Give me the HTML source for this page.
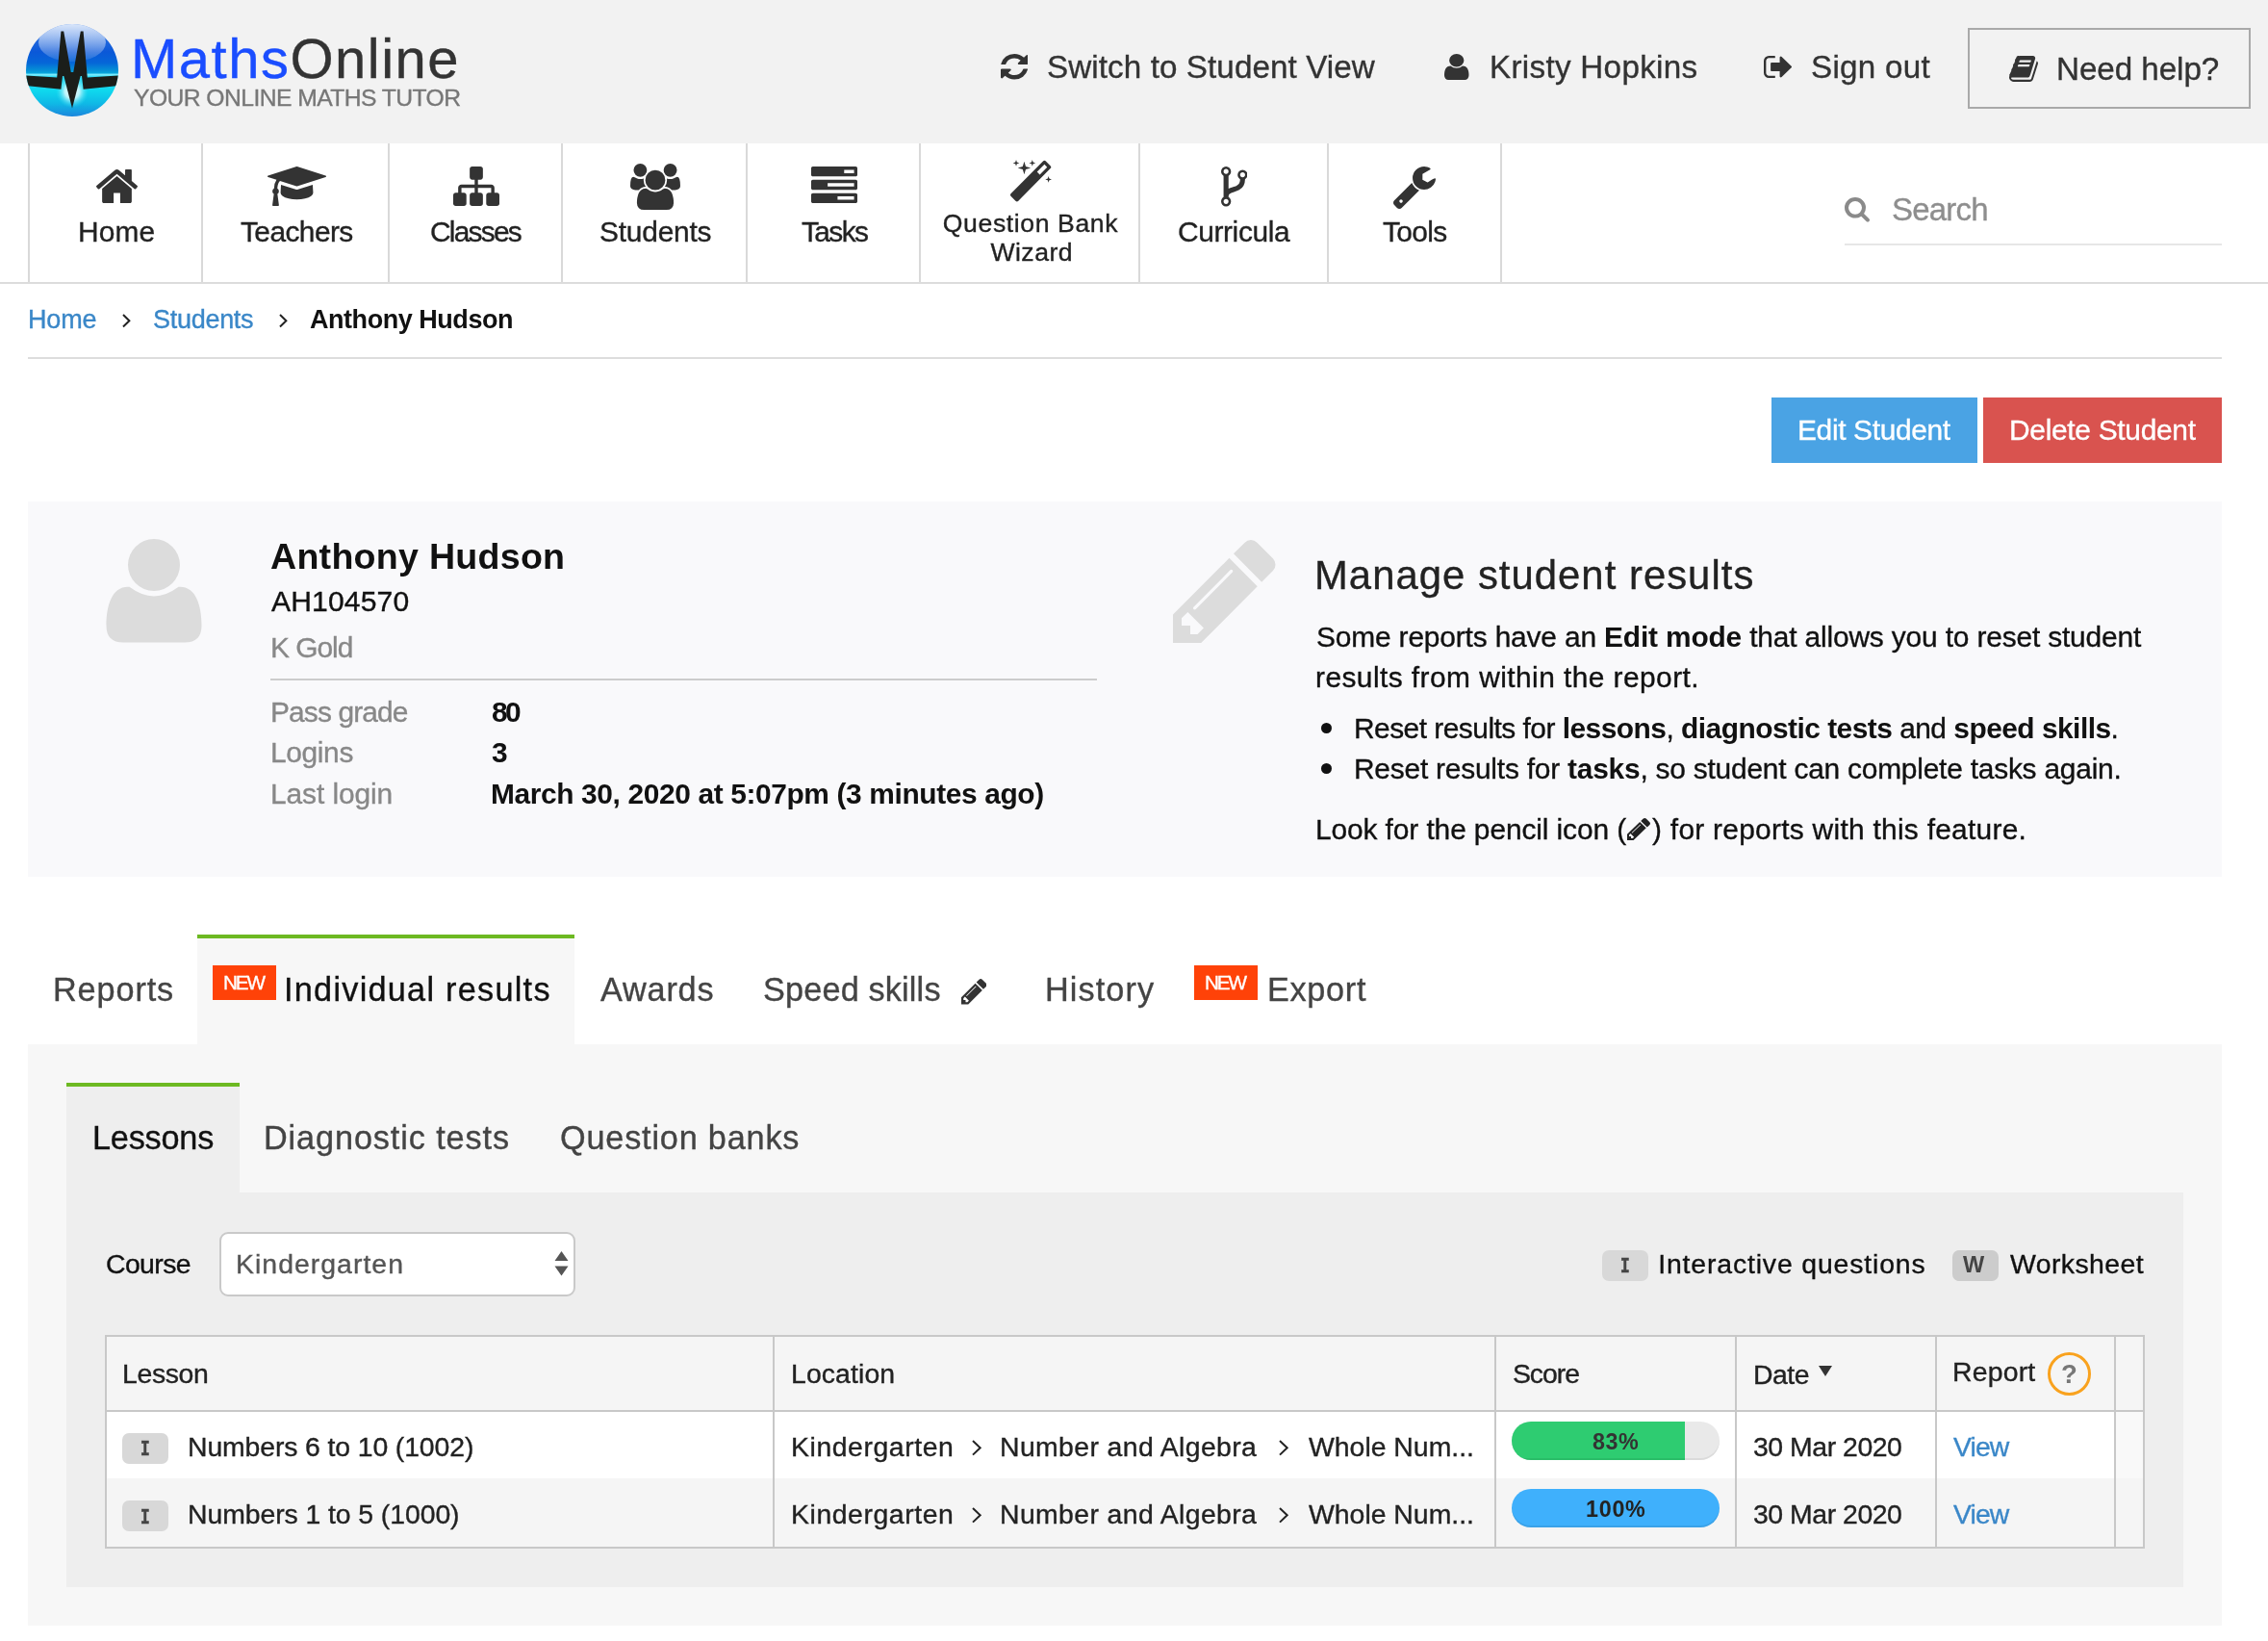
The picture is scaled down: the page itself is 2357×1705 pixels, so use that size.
<!DOCTYPE html>
<html lang="en"><head><meta charset="utf-8"><title>MathsOnline - Anthony Hudson</title><style>
*{margin:0;padding:0}
html,body{width:2357px;height:1705px;overflow:hidden;background:#fff}
body{position:relative;font-family:"Liberation Sans", sans-serif;will-change:transform}
body div,body svg.ic,.t{position:absolute}
.t{white-space:nowrap;line-height:1;font-weight:400;font-size:30px;text-decoration:none;display:block;-webkit-text-stroke:0.35px currentColor}
.t b{font-weight:700;-webkit-text-stroke:0}
</style></head><body>
<header>
<div style="left:0px;top:0px;width:2357px;height:148.5px;background:#f2f2f2;"></div>
<svg class="ic" style="left:25px;top:23px" width="100" height="100" viewBox="0 0 100 100">
<defs>
<linearGradient id="lg1" x1="0" y1="0" x2="0" y2="1"><stop offset="0" stop-color="#3f7fe6"/><stop offset="0.3" stop-color="#0b58d8"/><stop offset="0.42" stop-color="#0566d8"/><stop offset="0.5" stop-color="#0590d6"/><stop offset="0.528" stop-color="#08a4dc"/><stop offset="0.548" stop-color="#7ff0ff"/><stop offset="0.57" stop-color="#2fd9f4"/><stop offset="0.72" stop-color="#0fd8ee"/><stop offset="0.86" stop-color="#0fb9e6"/><stop offset="1" stop-color="#1c86dc"/></linearGradient>
<linearGradient id="lg2" x1="0" y1="0" x2="0" y2="1"><stop offset="0" stop-color="#ffffff" stop-opacity="0.82"/><stop offset="1" stop-color="#ffffff" stop-opacity="0.08"/></linearGradient>
<radialGradient id="lg3" cx="50" cy="72" r="17" gradientUnits="userSpaceOnUse"><stop offset="0" stop-color="#ffffff" stop-opacity="1"/><stop offset="0.45" stop-color="#d8fbff" stop-opacity="0.85"/><stop offset="1" stop-color="#30e0f4" stop-opacity="0"/></radialGradient>
<clipPath id="lgc"><circle cx="50" cy="50" r="48"/></clipPath>
</defs>
<circle cx="50" cy="50" r="48" fill="url(#lg1)"/>
<g clip-path="url(#lgc)">
<ellipse cx="50" cy="21" rx="35" ry="20" fill="url(#lg2)"/>
<ellipse cx="50" cy="72" rx="17" ry="19" fill="url(#lg3)"/>
<path d="M0 55.300 L34.200 57.500 L38.400 9.500 L41.200 9.500 L50 59 L58.800 9.500 L61.600 9.500 L65.800 57.500 L100 55.300 L96 66.200 L61.600 69.800 L60 56 L40 56 L38.400 69.800 L4 66.200 Z" fill="#1b1e1a"/>
<path d="M40.300 52 L59.700 52 L50 89.400 Z" fill="#1b1e1a"/>
</g>
</svg>
<span class="t" style="left:136.00px;top:31.89px;font-size:58px;color:#333;letter-spacing:1.500px;"><span style="color:#1a4dff">Maths</span><span style="color:#333">Online</span></span>
<span class="t" style="left:139.00px;top:90.09px;font-size:24.7px;color:#777;letter-spacing:-0.568px;">YOUR ONLINE MATHS TUTOR</span>
<svg class="ic" style="left:1039.5px;top:56px" width="28.5" height="26.5" viewBox="128.0 128.0 1536.0 1536.0" preserveAspectRatio="none"><path d="M1639 1056q0 5-1 7-64 268-268 434.500t-478 166.500q-146 0-282.500-55t-243.500-157l-129 129q-19 19-45 19t-45-19-19-45v-448q0-26 19-45t45-19h448q26 0 45 19t19 45-19 45l-137 137q71 66 161 102t187 36q134 0 250-65t186-179q11-17 53-117 8-23 30-23h192q13 0 22.500 9.500t9.500 22.500zm25-800v448q0 26-19 45t-45 19h-448q-26 0-45-19t-19-45 19-45l138-138q-148-137-349-137-134 0-250 65t-186 179q-11 17-53 117-8 23-30 23h-199q-13 0-22.500-9.500t-9.500-22.500v-7q65-268 270-434.500t480-166.500q146 0 284 55.500t245 156.500l130-129q19-19 45-19t45 19 19 45z" fill="#333"/></svg>
<span class="t" style="left:1088.00px;top:52.89px;font-size:33.2px;color:#333;letter-spacing:0.095px;">Switch to Student View</span>
<svg class="ic" style="left:1501px;top:56px" width="25.5" height="27" viewBox="256.0 128.0 1280.0 1536.0" preserveAspectRatio="none"><path d="M1536 1399q0 109-62.500 187t-150.500 78h-854q-88 0-150.500-78t-62.500-187q0-85 8.500-160.500t31.500-152 58.500-131 94-89 134.500-34.500q131 128 313 128t313-128q76 0 134.500 34.500t94 89 58.500 131 31.500 152 8.500 160.500zm-256-887q0 159-112.500 271.500t-271.500 112.500-271.500-112.500-112.500-271.500 112.500-271.500 271.500-112.500 271.500 112.500 112.500 271.500z" fill="#333"/></svg>
<span class="t" style="left:1548.00px;top:52.89px;font-size:33.2px;color:#333;letter-spacing:0.308px;">Kristy Hopkins</span>
<svg class="ic" style="left:1833px;top:58px" width="29" height="23" viewBox="64.0 256.0 1568.0 1280.0" preserveAspectRatio="none"><path d="M704 1440q0 4 1 20t.5 26.500-3 23.500-10 19.500-20.500 6.500h-320q-119 0-203.500-84.500t-84.500-203.500v-704q0-119 84.500-203.500t203.500-84.500h320q13 0 22.500 9.500t9.500 22.500q0 4 1 20t.5 26.500-3 23.500-10 19.500-20.500 6.500h-320q-66 0-113 47t-47 113v704q0 66 47 113t113 47h312l11.500 1 11.500 3 8 5.500 7 9 2 13.500zm928-544q0 26-19 45l-544 544q-19 19-45 19t-45-19-19-45v-288h-448q-26 0-45-19t-19-45v-384q0-26 19-45t45-19h448v-288q0-26 19-45t45-19 45 19l544 544q19 19 19 45z" fill="#333"/></svg>
<span class="t" style="left:1882.00px;top:52.89px;font-size:33.2px;color:#333;letter-spacing:0.286px;">Sign out</span>
<div style="left:2045px;top:29px;width:294px;height:83.5px;border:2px solid #a9a9a9;box-sizing:border-box;"></div>
<svg class="ic" style="left:2088px;top:58px" width="30" height="27" viewBox="-0.5 128.0 1665.3 1536.0" preserveAspectRatio="none"><path d="M1639 478q40 57 18 129l-275 906q-19 64-76.500 107.500t-122.500 43.500h-923q-77 0-148.500-53.500t-99.500-131.500q-24-67-2-127 0-4 3-27t4-37q1-8-3-21.500t-3-19.500q2-11 8-21t16.500-23.500 16.500-23.500q23-38 45-91.500t30-91.500q3-10 .5-30t-.5-28q3-11 17-28t17-23q21-36 42-92t25-90q1-9-2.500-32t.5-28q4-13 22-30.500t22-22.500q19-26 42.500-84.500t27.500-96.500q1-8-3-25.500t-2-26.500q2-8 9-18t18-23 17-21q8-12 16.500-30.500t15-35 16-36 19.500-32 26.500-23.500 36-11.500 47.500 5.500l-1 3q38-9 51-9h761q74 0 114 56t18 130l-274 906q-36 119-71.500 153.500t-128.500 34.500h-869q-27 0-38 15-11 16-1 43 24 70 144 70h923q29 0 56-15.500t35-41.500l300-987q7-22 5-57 38 15 59 43zm-1064 2q-4 13 2 22.500t20 9.500h608q13 0 25.500-9.500t16.500-22.500l21-64q4-13-2-22.500t-20-9.500h-608q-13 0-25.500 9.500t-16.500 22.500zm-83 256q-4 13 2 22.500t20 9.500h608q13 0 25.500-9.500t16.500-22.500l21-64q4-13-2-22.500t-20-9.500h-608q-13 0-25.500 9.500t-16.500 22.500z" fill="#333"/></svg>
<span class="t" style="left:2137.00px;top:54.89px;font-size:33.2px;color:#333;letter-spacing:-0.056px;">Need help?</span>
</header>
<nav>
<div style="left:0px;top:148.5px;width:2357px;height:144.5px;background:#ffffff;"></div>
<div style="left:0px;top:293px;width:2357px;height:2px;background:#dcdcdc;"></div>
<div style="left:29px;top:148.5px;width:2px;height:144.5px;background:#d9d9d9;"></div>
<div style="left:209px;top:148.5px;width:2px;height:144.5px;background:#d9d9d9;"></div>
<div style="left:403px;top:148.5px;width:2px;height:144.5px;background:#d9d9d9;"></div>
<div style="left:583px;top:148.5px;width:2px;height:144.5px;background:#d9d9d9;"></div>
<div style="left:775px;top:148.5px;width:2px;height:144.5px;background:#d9d9d9;"></div>
<div style="left:955px;top:148.5px;width:2px;height:144.5px;background:#d9d9d9;"></div>
<div style="left:1183px;top:148.5px;width:2px;height:144.5px;background:#d9d9d9;"></div>
<div style="left:1379px;top:148.5px;width:2px;height:144.5px;background:#d9d9d9;"></div>
<div style="left:1559px;top:148.5px;width:2px;height:144.5px;background:#d9d9d9;"></div>
<svg class="ic" style="left:99.5px;top:176px" width="43.0" height="35" viewBox="89.9 253.0 1612.2 1283.0" preserveAspectRatio="none"><path d="M1472 992v480q0 26-19 45t-45 19h-384v-384h-256v384h-384q-26 0-45-19t-19-45v-480q0-1 .5-3t.5-3l575-474 575 474q1 2 1 6zm223-69l-62 74q-8 9-21 11h-3q-13 0-21-7l-692-577-692 577q-12 8-24 7-13-2-21-11l-62-74q-8-10-7-23.500t11-21.500l719-599q32-26 76-26t76 26l244 204v-195q0-14 9-23t23-9h192q14 0 23 9t9 23v408l219 182q10 8 11 21.500t-7 23.500z" fill="#333"/></svg>
<span class="t" style="left:81.00px;top:225.68px;font-size:29.9px;color:#222;letter-spacing:0.167px;">Home</span>
<svg class="ic" style="left:277.5px;top:173px" width="61.0" height="41" viewBox="0.0 128.0 2304.0 1536.0" preserveAspectRatio="none"><path d="M1774 836l18 316q4 69-82 128t-235 93.500-323 34.500-323-34.500-235-93.500-82-128l18-316 574 181q22 7 48 7t48-7zm530-324q0 23-22 31l-1120 352q-4 1-10 1t-10-1l-652-206q-43 34-71 111.500t-34 178.500q63 36 63 109 0 69-58 107l58 433q2 14-8 25-9 11-24 11h-192q-15 0-24-11-10-11-8-25l58-433q-58-38-58-107 0-73 65-111 11-207 98-330l-333-104q-22-8-22-31t22-31l1120-352q4-1 10-1t10 1l1120 352q22 8 22 31z" fill="#333"/></svg>
<span class="t" style="left:250.00px;top:225.68px;font-size:29.9px;color:#222;letter-spacing:-0.571px;">Teachers</span>
<svg class="ic" style="left:470.5px;top:173px" width="48.0" height="41" viewBox="0.0 128.0 1792.0 1536.0" preserveAspectRatio="none"><path d="M1792 1248v320q0 40-28 68t-68 28h-320q-40 0-68-28t-28-68v-320q0-40 28-68t68-28h96v-192h-512v192h96q40 0 68 28t28 68v320q0 40-28 68t-68 28h-320q-40 0-68-28t-28-68v-320q0-40 28-68t68-28h96v-192h-512v192h96q40 0 68 28t28 68v320q0 40-28 68t-68 28h-320q-40 0-68-28t-28-68v-320q0-40 28-68t68-28h96v-192q0-52 38-90t90-38h512v-192h-96q-40 0-68-28t-28-68v-320q0-40 28-68t68-28h320q40 0 68 28t28 68v320q0 40-28 68t-68 28h-96v192h512q52 0 90 38t38 90v192h96q40 0 68 28t28 68z" fill="#333"/></svg>
<span class="t" style="left:447.00px;top:225.68px;font-size:29.9px;color:#222;letter-spacing:-1.750px;">Classes</span>
<svg class="ic" style="left:655px;top:169.5px" width="52" height="48.0" viewBox="0.0 0.0 1920.0 1792.0" preserveAspectRatio="none"><path d="M593 896q-162 5-265 128h-134q-82 0-138-40.500t-56-118.500q0-353 124-353 6 0 43.500 21t97.500 42.500 119 21.500q67 0 133-23-5 37-5 66 0 139 81 256zm1071 637q0 120-73 189.500t-194 69.500h-874q-121 0-194-69.500t-73-189.500q0-53 3.500-103.500t14-109 26.500-108.500 43-97.500 62-81 85.500-53.500 111.500-20q10 0 43 21.500t73 48 107 48 135 21.500 135-21.500 107-48 73-48 43-21.500q61 0 111.500 20t85.500 53.500 62 81 43 97.500 26.500 108.500 14 109 3.500 103.500zm-1024-1277q0 106-75 181t-181 75-181-75-75-181 75-181 181-75 181 75 75 181zm704 384q0 159-112.500 271.500t-271.500 112.500-271.500-112.500-112.500-271.500 112.500-271.500 271.500-112.500 271.500 112.500 112.500 271.500zm576 225q0 78-56 118.500t-138 40.500h-134q-103-123-265-128 81-117 81-256 0-29-5-66 66 23 133 23 59 0 119-21.500t97.500-42.500 43.500-21q124 0 124 353zm-128-609q0 106-75 181t-181 75-181-75-75-181 75-181 181-75 181 75 75 181z" fill="#333"/></svg>
<span class="t" style="left:623.00px;top:225.68px;font-size:29.9px;color:#222;letter-spacing:-0.214px;">Students</span>
<svg class="ic" style="left:843px;top:173px" width="48" height="38" viewBox="0.0 128.0 1792.0 1408.0" preserveAspectRatio="none"><path d="M1024 1408h640v-128h-640v128zm-384-512h1024v-128h-1024v128zm640-512h384v-128h-384v128zm512 832v256q0 26-19 45t-45 19h-1664q-26 0-45-19t-19-45v-256q0-26 19-45t45-19h1664q26 0 45 19t19 45zm0-512v256q0 26-19 45t-45 19h-1664q-26 0-45-19t-19-45v-256q0-26 19-45t45-19h1664q26 0 45 19t19 45zm0-512v256q0 26-19 45t-45 19h-1664q-26 0-45-19t-19-45v-256q0-26 19-45t45-19h1664q26 0 45 19t19 45z" fill="#333"/></svg>
<span class="t" style="left:833.00px;top:225.68px;font-size:29.9px;color:#222;letter-spacing:-1.625px;">Tasks</span>
<svg class="ic" style="left:1049.5px;top:166px" width="43.0" height="43.5" viewBox="91.0 0.0 1637.0 1637.0" preserveAspectRatio="none"><path d="M1254 581l293-293-107-107-293 293zm447-293q0 27-18 45l-1286 1286q-18 18-45 18t-45-18l-198-198q-18-18-18-45t18-45l1286-1286q18-18 45-18t45 18l198 198q18 18 18 45zm-1351-190l98 30-98 30-30 98-30-98-98-30 98-30 30-98zm350 162l196 60-196 60-60 196-60-196-196-60 196-60 60-196zm930 478l98 30-98 30-30 98-30-98-98-30 98-30 30-98zm-640-640l98 30-98 30-30 98-30-98-98-30 98-30 30-98z" fill="#333"/></svg>
<span class="t" style="left:979.80px;top:219.48px;font-size:26.6px;color:#222;letter-spacing:0.608px;">Question Bank</span>
<span class="t" style="left:1029.40px;top:249.48px;font-size:26.6px;color:#222;letter-spacing:0.480px;">Wizard</span>
<svg class="ic" style="left:1268.5px;top:173px" width="27.5" height="41.5" viewBox="0.0 128.0 1024.0 1536.0" preserveAspectRatio="none"><path d="M288 1472q0-40-28-68t-68-28-68 28-28 68 28 68 68 28 68-28 28-68zm0-1152q0-40-28-68t-68-28-68 28-28 68 28 68 68 28 68-28 28-68zm640 128q0-40-28-68t-68-28-68 28-28 68 28 68 68 28 68-28 28-68zm96 0q0 52-26 96.500t-70 69.500q-2 287-226 414-67 38-203 81-128 40-169.500 71t-41.500 100v26q44 25 70 69.500t26 96.500q0 80-56 136t-136 56-136-56-56-136q0-52 26-96.500t70-69.500v-820q-44-25-70-69.500t-26-96.500q0-80 56-136t136-56 136 56 56 136q0 52-26 96.500t-70 69.500v497q54-26 154-57 55-17 87.500-29.500t70.500-31 59-39.500 40.500-51 28-69.500 8.500-91.500q-44-25-70-69.500t-26-96.500q0-80 56-136t136-56 136 56 56 136z" fill="#333"/></svg>
<span class="t" style="left:1224.00px;top:225.68px;font-size:29.9px;color:#222;letter-spacing:-0.375px;">Curricula</span>
<svg class="ic" style="left:1448px;top:173px" width="44" height="44" viewBox="85.0 128.0 1641.0 1643.0" preserveAspectRatio="none"><path d="M448 1472q0-26-19-45t-45-19-45 19-19 45 19 45 45 19 45-19 19-45zm644-420l-682 682q-37 37-90 37-52 0-91-37l-106-108q-38-36-38-90 0-53 38-91l681-681q39 98 114.500 173.500t173.500 114.500zm634-435q0 39-23 106-47 134-164.500 217.500t-258.500 83.500q-185 0-316.500-131.500t-131.500-316.500 131.500-316.500 316.500-131.500q58 0 121.500 16.500t107.500 46.500q16 11 16 28t-16 28l-293 169v224l193 107q5-3 79-48.500t135.500-81 70.500-35.500q15 0 23.500 10t8.500 25z" fill="#333"/></svg>
<span class="t" style="left:1437.00px;top:225.68px;font-size:29.9px;color:#222;letter-spacing:-0.625px;">Tools</span>
<svg class="ic" style="left:1917px;top:205px" width="26" height="25.5" viewBox="64.0 128.0 1664.0 1664.0" preserveAspectRatio="none"><path d="M1216 832q0-185-131.500-316.500t-316.500-131.500-316.500 131.500-131.500 316.500 131.500 316.500 316.500 131.500 316.500-131.500 131.500-316.500zm512 832q0 52-38 90t-90 38q-54 0-90-38l-343-342q-179 124-399 124-143 0-273.500-55.500t-225-150-150-225-55.500-273.500 55.500-273.500 150-225 225-150 273.500-55.500 273.500 55.500 225 150 150 225 55.500 273.500q0 220-124 399l343 343q37 37 37 90z" fill="#8a8a8a"/></svg>
<span class="t" style="left:1966.00px;top:201.06px;font-size:33px;color:#8e8e8e;letter-spacing:-0.800px;">Search</span>
<div style="left:1917px;top:253px;width:392px;height:2px;background:#e6e6e6;"></div>
</nav>
<div>
<a class="t" style="left:29.00px;top:319.14px;font-size:27px;color:#3a87c8;letter-spacing:-0.167px;">Home</a>
<svg class="ic" style="left:126.20px;top:324.76px" width="10.40" height="16.48" viewBox="-2 -2 10.40 16.48"><polyline points="0,0 6.40,6.24 0,12.48" fill="none" stroke="#222" stroke-width="2"/></svg>
<a class="t" style="left:159.00px;top:319.14px;font-size:27px;color:#3a87c8;letter-spacing:-0.286px;">Students</a>
<svg class="ic" style="left:289.20px;top:324.76px" width="10.40" height="16.48" viewBox="-2 -2 10.40 16.48"><polyline points="0,0 6.40,6.24 0,12.48" fill="none" stroke="#222" stroke-width="2"/></svg>
<span class="t" style="left:322.00px;top:319.14px;font-size:27px;color:#111;font-weight:700;-webkit-text-stroke:0;letter-spacing:-0.462px;">Anthony Hudson</span>
<div style="left:29px;top:371px;width:2280px;height:2px;background:#dddddd;"></div>
</div>
<div style="left:1841px;top:413px;width:214px;height:67.75px;background:#4aa3e4;"></div>
<span class="t" style="left:1868.00px;top:431.68px;font-size:29.9px;color:#fff;letter-spacing:-0.341px;">Edit Student</span>
<div style="left:2061px;top:413px;width:248px;height:67.75px;background:#d9534f;"></div>
<span class="t" style="left:2088.00px;top:431.68px;font-size:29.9px;color:#fff;letter-spacing:-0.288px;">Delete Student</span>
<section>
<div style="left:29px;top:521px;width:2280px;height:389.5px;background:#f9f9fb;"></div>
<svg class="ic" style="left:110px;top:559px" width="100" height="110" viewBox="110 559 100 110"><circle cx="160" cy="587" r="27" fill="#dcdcdc"/><path d="M134.500 609.800 Q160 629 185.500 609.800 C203 608.500 209.500 628 209.500 650 Q209.500 667.500 192 667.500 L128 667.500 Q110.500 667.500 110.500 650 C110.500 628 117 608.500 134.500 609.800 Z" fill="#dcdcdc"/></svg>
<h1 class="t" style="left:281.00px;top:560.16px;font-size:37.6px;color:#111;font-weight:700;-webkit-text-stroke:0;letter-spacing:0.262px;">Anthony Hudson</h1>
<span class="t" style="left:282.00px;top:609.51px;font-size:30.1px;color:#111;letter-spacing:0.143px;">AH104570</span>
<span class="t" style="left:281.00px;top:657.68px;font-size:29.9px;color:#888;letter-spacing:-1.000px;">K Gold</span>
<div style="left:281px;top:704.5px;width:858.5px;height:2.0px;background:#cccccc;"></div>
<span class="t" style="left:281.00px;top:724.68px;font-size:29.9px;color:#888;letter-spacing:-0.861px;">Pass grade</span>
<span class="t" style="left:511.00px;top:724.68px;font-size:29.9px;color:#111;font-weight:700;-webkit-text-stroke:0;letter-spacing:-2.500px;">80</span>
<span class="t" style="left:281.00px;top:766.68px;font-size:29.9px;color:#888;letter-spacing:-0.350px;">Logins</span>
<span class="t" style="left:511.00px;top:766.68px;font-size:29.9px;color:#111;font-weight:700;-webkit-text-stroke:0;">3</span>
<span class="t" style="left:281.00px;top:809.68px;font-size:29.9px;color:#888;letter-spacing:-0.083px;">Last login</span>
<span class="t" style="left:510.00px;top:809.68px;font-size:29.9px;color:#111;font-weight:700;-webkit-text-stroke:0;letter-spacing:-0.374px;">March 30, 2020 at 5:07pm (3 minutes ago)</span>
<svg class="ic" style="left:1219px;top:561px" width="106.5" height="107" viewBox="128.0 149.0 1515.0 1515.0" preserveAspectRatio="none"><path d="M491 1536l91-91-235-235-91 91v107h128v128h107zm523-928q0-22-22-22-10 0-17 7l-542 542q-7 7-7 17 0 22 22 22 10 0 17-7l542-542q7-7 7-17zm-54-192l416 416-832 832h-416v-416zm683 96q0 53-37 90l-166 166-416-416 166-165q36-38 90-38 53 0 91 38l235 234q37 39 37 91z" fill="#dcdcdc"/></svg>
<h2 class="t" style="left:1366.00px;top:576.61px;font-size:41.8px;color:#222;letter-spacing:1.038px;">Manage student results</h2>
<span class="t" style="left:1368.00px;top:646.68px;font-size:29.9px;color:#111;letter-spacing:-0.161px;">Some reports have an <b>Edit mode</b> that allows you to reset student</span>
<span class="t" style="left:1367.00px;top:688.68px;font-size:29.9px;color:#111;letter-spacing:0.440px;">results from within the report.</span>
<div style="left:1372.5px;top:750.5px;width:11.5px;height:11.5px;background:#111;border-radius:50%;"></div>
<span class="t" style="left:1407.00px;top:741.68px;font-size:29.9px;color:#111;letter-spacing:-0.513px;">Reset results for <b>lessons</b>, <b>diagnostic tests</b> and <b>speed skills</b>.</span>
<div style="left:1372.5px;top:792.5px;width:11.5px;height:11.5px;background:#111;border-radius:50%;"></div>
<span class="t" style="left:1407.00px;top:783.68px;font-size:29.9px;color:#111;letter-spacing:-0.217px;">Reset results for <b>tasks</b>, so student can complete tasks again.</span>
<span class="t" style="left:1367.00px;top:846.68px;font-size:29.9px;color:#111;letter-spacing:-0.100px;">Look for the pencil icon (</span>
<svg class="ic" style="left:1690.5px;top:849.5px" width="24.0" height="23.0" viewBox="128.0 149.0 1515.0 1515.0" preserveAspectRatio="none"><path d="M491 1536l91-91-235-235-91 91v107h128v128h107zm523-928q0-22-22-22-10 0-17 7l-542 542q-7 7-7 17 0 22 22 22 10 0 17-7l542-542q7-7 7-17zm-54-192l416 416-832 832h-416v-416zm683 96q0 53-37 90l-166 166-416-416 166-165q36-38 90-38 53 0 91 38l235 234q37 39 37 91z" fill="#222"/></svg>
<span class="t" style="left:1717.00px;top:846.68px;font-size:29.9px;color:#111;letter-spacing:0.274px;">) for reports with this feature.</span>
</section>
<section>
<div style="left:29px;top:1085px;width:2280px;height:604px;background:#f7f7f7;"></div>
<div style="left:205px;top:971.25px;width:392px;height:114.75px;background:#f7f7f7;"></div>
<div style="left:205px;top:971.25px;width:392px;height:4.0px;background:#6db922;"></div>
<span class="t" style="left:55.00px;top:1011.00px;font-size:34.25px;color:#444;letter-spacing:0.875px;">Reports</span>
<div style="left:221px;top:1003px;width:66px;height:35.75px;background:#ff4208;"></div>
<span class="t" style="left:232.00px;top:1011.47px;font-size:20.7px;color:#fff;letter-spacing:-2.125px;">NEW</span>
<span class="t" style="left:295.00px;top:1011.00px;font-size:34.25px;color:#111;letter-spacing:1.259px;">Individual results</span>
<span class="t" style="left:624.00px;top:1011.00px;font-size:34.25px;color:#444;letter-spacing:0.800px;">Awards</span>
<span class="t" style="left:793.00px;top:1011.00px;font-size:34.25px;color:#444;letter-spacing:0.159px;">Speed skills</span>
<svg class="ic" style="left:998.5px;top:1017px" width="26.5" height="26.5" viewBox="128.0 149.0 1515.0 1515.0" preserveAspectRatio="none"><path d="M491 1536l91-91-235-235-91 91v107h128v128h107zm523-928q0-22-22-22-10 0-17 7l-542 542q-7 7-7 17 0 22 22 22 10 0 17-7l542-542q7-7 7-17zm-54-192l416 416-832 832h-416v-416zm683 96q0 53-37 90l-166 166-416-416 166-165q36-38 90-38 53 0 91 38l235 234q37 39 37 91z" fill="#333"/></svg>
<span class="t" style="left:1086.00px;top:1011.00px;font-size:34.25px;color:#444;letter-spacing:1.083px;">History</span>
<div style="left:1241px;top:1003px;width:66px;height:35.75px;background:#ff4208;"></div>
<span class="t" style="left:1252.00px;top:1011.47px;font-size:20.7px;color:#fff;letter-spacing:-2.125px;">NEW</span>
<span class="t" style="left:1317.00px;top:1011.00px;font-size:34.25px;color:#444;letter-spacing:0.700px;">Export</span>
<div style="left:69px;top:1238.75px;width:2199.75px;height:410.0px;background:#eeeeee;"></div>
<div style="left:69px;top:1125px;width:179.75px;height:115px;background:#eeeeee;"></div>
<div style="left:69px;top:1125px;width:179.75px;height:4px;background:#6db922;"></div>
<span class="t" style="left:96.00px;top:1165.00px;font-size:34.25px;color:#111;letter-spacing:-0.208px;">Lessons</span>
<span class="t" style="left:274.00px;top:1165.00px;font-size:34.25px;color:#444;letter-spacing:0.887px;">Diagnostic tests</span>
<span class="t" style="left:582.00px;top:1165.00px;font-size:34.25px;color:#444;letter-spacing:0.808px;">Question banks</span>
<label class="t" style="left:110.00px;top:1298.95px;font-size:28.4px;color:#111;letter-spacing:-0.600px;">Course</label>
<div style="left:227.5px;top:1280px;width:370.5px;height:66.5px;background:#fff;border:2px solid #c9c9c9;border-radius:9px;box-sizing:border-box;"></div>
<span class="t" style="left:245.00px;top:1298.95px;font-size:28.4px;color:#555;letter-spacing:1.036px;">Kindergarten</span>
<svg class="ic" style="left:575.5px;top:1300px" width="15" height="26" viewBox="0 0 15 26"><path d="M7.500 0 L14.500 10 L0.500 10 Z M0.500 15.500 L14.500 15.500 L7.500 25.500 Z" fill="#555"/></svg>
<div style="left:1665px;top:1299px;width:48px;height:31.75px;background:#d8d8d8;border-radius:7px;"></div>
<span class="t" style="left:1684.20px;top:1305.12px;font-size:22.3px;color:#444;font-weight:700;-webkit-text-stroke:0;font-family:'Liberation Mono', monospace;transform:scaleX(0.72);transform-origin:0 0;-webkit-text-stroke:0.7px #444;">I</span>
<span class="t" style="left:1723.20px;top:1298.95px;font-size:28.4px;color:#111;letter-spacing:0.855px;">Interactive questions</span>
<div style="left:2029px;top:1299px;width:47.75px;height:31.75px;background:#cccccc;border-radius:7px;"></div>
<span class="t" style="left:2040.00px;top:1303.10px;font-size:23.5px;color:#444;font-weight:700;-webkit-text-stroke:0;">W</span>
<span class="t" style="left:2089.00px;top:1298.95px;font-size:28.4px;color:#111;letter-spacing:0.438px;">Worksheet</span>
<div style="left:108.5px;top:1387px;width:2120.5px;height:221.5px;background:#c8c8c8;"></div>
<div style="left:110.5px;top:1389px;width:692.25px;height:75.5px;background:#f5f5f5;"></div>
<div style="left:110.5px;top:1466.5px;width:692.25px;height:69.75px;background:#ffffff;"></div>
<div style="left:110.5px;top:1536.25px;width:692.25px;height:70.25px;background:#f5f5f5;"></div>
<div style="left:804.75px;top:1389px;width:748.25px;height:75.5px;background:#f5f5f5;"></div>
<div style="left:804.75px;top:1466.5px;width:748.25px;height:69.75px;background:#ffffff;"></div>
<div style="left:804.75px;top:1536.25px;width:748.25px;height:70.25px;background:#f5f5f5;"></div>
<div style="left:1555px;top:1389px;width:247.75px;height:75.5px;background:#f5f5f5;"></div>
<div style="left:1555px;top:1466.5px;width:247.75px;height:69.75px;background:#ffffff;"></div>
<div style="left:1555px;top:1536.25px;width:247.75px;height:70.25px;background:#f5f5f5;"></div>
<div style="left:1804.75px;top:1389px;width:206.25px;height:75.5px;background:#f5f5f5;"></div>
<div style="left:1804.75px;top:1466.5px;width:206.25px;height:69.75px;background:#ffffff;"></div>
<div style="left:1804.75px;top:1536.25px;width:206.25px;height:70.25px;background:#f5f5f5;"></div>
<div style="left:2013px;top:1389px;width:184px;height:75.5px;background:#f5f5f5;"></div>
<div style="left:2013px;top:1466.5px;width:184px;height:69.75px;background:#ffffff;"></div>
<div style="left:2013px;top:1536.25px;width:184px;height:70.25px;background:#f5f5f5;"></div>
<div style="left:2199px;top:1389px;width:28px;height:75.5px;background:#f5f5f5;"></div>
<div style="left:2199px;top:1466.5px;width:28px;height:69.75px;background:#f9f9f9;"></div>
<div style="left:2199px;top:1536.25px;width:28px;height:70.25px;background:#f5f5f5;"></div>
<span class="t" style="left:127.00px;top:1412.95px;font-size:28.4px;color:#222;letter-spacing:-0.350px;">Lesson</span>
<span class="t" style="left:822.00px;top:1412.95px;font-size:28.4px;color:#222;letter-spacing:0.107px;">Location</span>
<span class="t" style="left:1572.00px;top:1412.95px;font-size:28.4px;color:#222;letter-spacing:-1.062px;">Score</span>
<span class="t" style="left:1822.00px;top:1413.95px;font-size:28.4px;color:#222;letter-spacing:-0.500px;">Date</span>
<span class="t" style="left:2029.00px;top:1410.95px;font-size:28.4px;color:#222;letter-spacing:0.200px;">Report</span>
<svg class="ic" style="left:1890px;top:1419px" width="14" height="11" viewBox="0 0 14 11"><path d="M0 0 L14 0 L7 11 Z" fill="#333"/></svg>
<div style="left:2127.5px;top:1405px;width:45.0px;height:45px;border:3.5px solid #f9a21e;border-radius:50%;box-sizing:border-box;"></div>
<span class="t" style="left:2142.00px;top:1413.72px;font-size:27.5px;color:#777;font-weight:700;-webkit-text-stroke:0;">?</span>
<div style="left:127px;top:1489px;width:48px;height:31.75px;background:#d8d8d8;border-radius:7px;"></div>
<span class="t" style="left:146.20px;top:1495.12px;font-size:22.3px;color:#444;font-weight:700;-webkit-text-stroke:0;font-family:'Liberation Mono', monospace;transform:scaleX(0.72);transform-origin:0 0;-webkit-text-stroke:0.7px #444;">I</span>
<span class="t" style="left:195.00px;top:1488.95px;font-size:28.4px;color:#222;letter-spacing:-0.119px;">Numbers 6 to 10 (1002)</span>
<span class="t" style="left:822.00px;top:1488.95px;font-size:28.4px;color:#222;letter-spacing:0.568px;">Kindergarten</span>
<svg class="ic" style="left:1008.90px;top:1495.18px" width="11.70" height="18.63" viewBox="-2 -2 11.70 18.63"><polyline points="0,0 7.70,7.31 0,14.63" fill="none" stroke="#222" stroke-width="2"/></svg>
<span class="t" style="left:1039.00px;top:1488.95px;font-size:28.4px;color:#222;letter-spacing:0.382px;">Number and Algebra</span>
<svg class="ic" style="left:1327.90px;top:1495.18px" width="11.70" height="18.63" viewBox="-2 -2 11.70 18.63"><polyline points="0,0 7.70,7.31 0,14.63" fill="none" stroke="#222" stroke-width="2"/></svg>
<span class="t" style="left:1360.00px;top:1488.95px;font-size:28.4px;color:#222;">Whole Num...</span>
<span class="t" style="left:1822.00px;top:1488.95px;font-size:28.4px;color:#222;letter-spacing:-0.450px;">30 Mar 2020</span>
<a class="t" style="left:2030.00px;top:1488.95px;font-size:28.4px;color:#3a87c8;letter-spacing:-0.917px;">View</a>
<div style="left:127px;top:1559.25px;width:48px;height:31.75px;background:#d8d8d8;border-radius:7px;"></div>
<span class="t" style="left:146.20px;top:1566.12px;font-size:22.3px;color:#444;font-weight:700;-webkit-text-stroke:0;font-family:'Liberation Mono', monospace;transform:scaleX(0.72);transform-origin:0 0;-webkit-text-stroke:0.7px #444;">I</span>
<span class="t" style="left:195.00px;top:1558.95px;font-size:28.4px;color:#222;letter-spacing:-0.075px;">Numbers 1 to 5 (1000)</span>
<span class="t" style="left:822.00px;top:1558.95px;font-size:28.4px;color:#222;letter-spacing:0.568px;">Kindergarten</span>
<svg class="ic" style="left:1008.90px;top:1565.18px" width="11.70" height="18.63" viewBox="-2 -2 11.70 18.63"><polyline points="0,0 7.70,7.31 0,14.63" fill="none" stroke="#222" stroke-width="2"/></svg>
<span class="t" style="left:1039.00px;top:1558.95px;font-size:28.4px;color:#222;letter-spacing:0.382px;">Number and Algebra</span>
<svg class="ic" style="left:1327.90px;top:1565.18px" width="11.70" height="18.63" viewBox="-2 -2 11.70 18.63"><polyline points="0,0 7.70,7.31 0,14.63" fill="none" stroke="#222" stroke-width="2"/></svg>
<span class="t" style="left:1360.00px;top:1558.95px;font-size:28.4px;color:#222;">Whole Num...</span>
<span class="t" style="left:1822.00px;top:1558.95px;font-size:28.4px;color:#222;letter-spacing:-0.450px;">30 Mar 2020</span>
<a class="t" style="left:2030.00px;top:1558.95px;font-size:28.4px;color:#3a87c8;letter-spacing:-0.917px;">View</a>
<div style="left:1571.25px;top:1477px;width:215.75px;height:40px;background:#e9e9e9;border-radius:20px;overflow:hidden;box-shadow:inset 0 -2px 0 rgba(0,0,0,0.06);"><div style="position:absolute;left:0;top:0;height:40px;width:179.75px;background:#2ecc71;box-shadow:inset 0 -2px 0 rgba(0,0,0,0.08)"></div></div>
<span class="t" style="left:1655.00px;top:1487.27px;font-size:23.3px;color:#333;font-weight:700;-webkit-text-stroke:0;letter-spacing:0.500px;">83%</span>
<div style="left:1571.25px;top:1547px;width:215.75px;height:40px;background:#3fb0fc;border-radius:20px;box-shadow:inset 0 -2px 0 rgba(0,0,0,0.08);"></div>
<span class="t" style="left:1648.00px;top:1557.27px;font-size:23.3px;color:#222;font-weight:700;-webkit-text-stroke:0;letter-spacing:0.750px;">100%</span>
</section>
</body></html>
